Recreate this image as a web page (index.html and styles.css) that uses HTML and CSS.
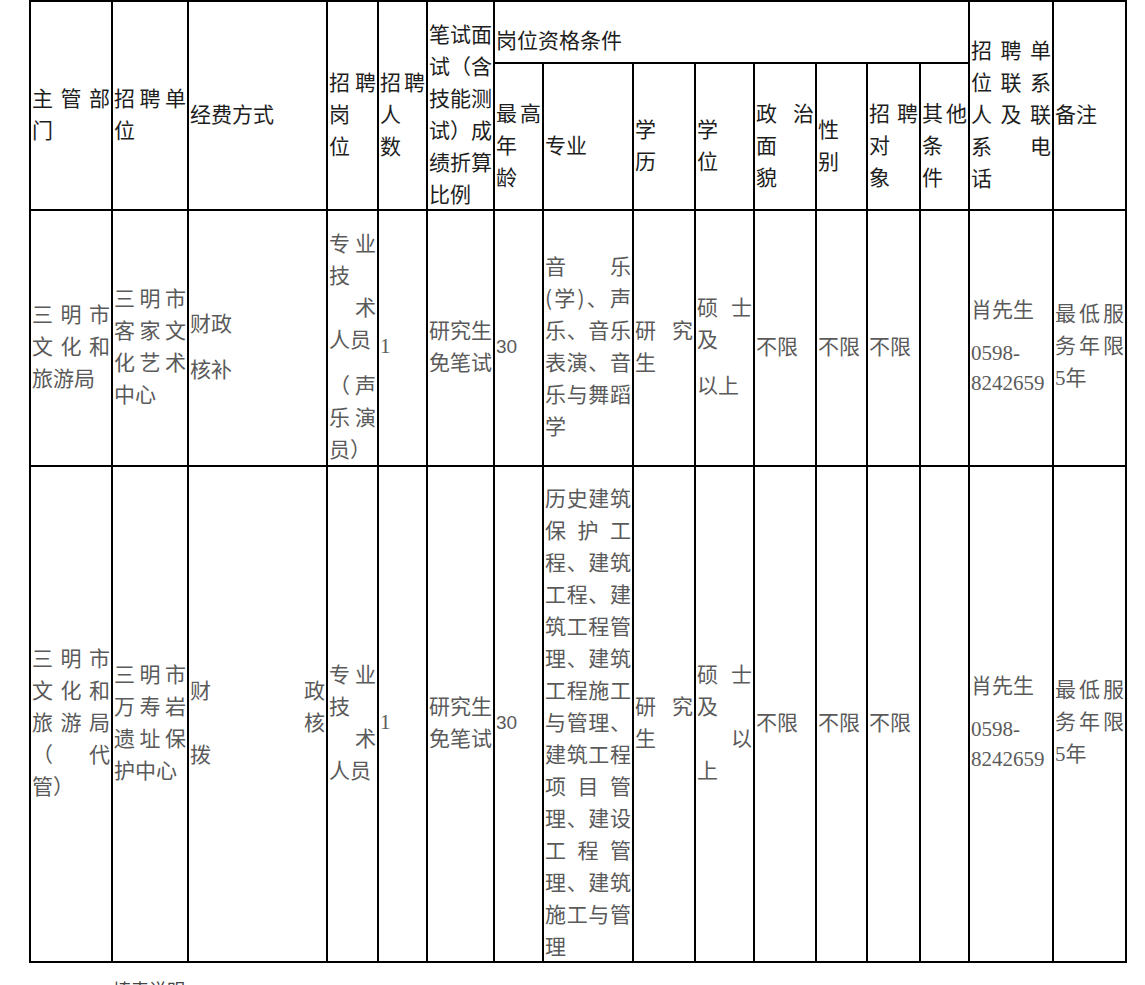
FILE: index.html
```html
<!DOCTYPE html>
<html lang="zh-CN">
<head>
<meta charset="utf-8">
<title>招聘岗位表</title>
<link rel="stylesheet" href="styles.css">
</head>
<body>
<table class="sheet">
  <colgroup>
    <col style="width:82px"><col style="width:76px"><col style="width:139px"><col style="width:51px">
    <col style="width:49px"><col style="width:67px"><col style="width:49px"><col style="width:90px">
    <col style="width:62px"><col style="width:59px"><col style="width:62px"><col style="width:51px">
    <col style="width:53px"><col style="width:49px"><col style="width:84px"><col style="width:73px">
  </colgroup>
  <thead>
    <tr class="h1">
      <th rowspan="2"><span class="ln j">主管部</span><span class="ln">门</span></th>
      <th rowspan="2"><span class="ln j">招聘单</span><span class="ln">位</span></th>
      <th rowspan="2">经费方式</th>
      <th rowspan="2"><span class="ln j">招聘</span><span class="ln">岗</span><span class="ln">位</span></th>
      <th rowspan="2"><span class="ln j">招聘</span><span class="ln">人</span><span class="ln">数</span></th>
      <th rowspan="2"><span class="ln j">笔试面</span><span class="ln j">试（含</span><span class="ln j">技能测</span><span class="ln j">试）成</span><span class="ln j">绩折算</span><span class="ln">比例</span></th>
      <th colspan="8">岗位资格条件</th>
      <th rowspan="2"><span class="ln j">招聘单</span><span class="ln j">位联系</span><span class="ln j">人及联</span><span class="ln j">系电</span><span class="ln">话</span></th>
      <th rowspan="2">备注</th>
    </tr>
    <tr class="h2">
      <th><span class="ln j">最高</span><span class="ln">年</span><span class="ln">龄</span></th>
      <th>专业</th>
      <th><span class="ln">学</span><span class="ln">历</span></th>
      <th><span class="ln">学</span><span class="ln">位</span></th>
      <th><span class="ln j">政治</span><span class="ln">面</span><span class="ln">貌</span></th>
      <th><span class="ln">性</span><span class="ln">别</span></th>
      <th><span class="ln j">招聘</span><span class="ln">对</span><span class="ln">象</span></th>
      <th><span class="ln j">其他</span><span class="ln">条</span><span class="ln">件</span></th>
    </tr>
  </thead>
  <tbody>
    <tr class="r1">
      <td><span class="ln j">三明市</span><span class="ln j">文化和</span><span class="ln">旅游局</span></td>
      <td><span class="ln j">三明市</span><span class="ln j">客家文</span><span class="ln j">化艺术</span><span class="ln">中心</span></td>
      <td><span class="ln">财政</span><span class="ln gap">核补</span></td>
      <td><span class="ln j">专业</span><span class="ln">技</span><span class="ln r">术</span><span class="ln">人员</span><span class="ln j gap">（声</span><span class="ln j">乐演</span><span class="ln">员）</span></td>
      <td><span class="num">1</span></td>
      <td><span class="ln">研究生</span><span class="ln">免笔试</span></td>
      <td><span class="sn">30</span></td>
      <td><span class="ln j">音乐</span><span class="ln j">(学)、声</span><span class="ln j">乐、音乐</span><span class="ln j">表演、音</span><span class="ln j">乐与舞蹈</span><span class="ln">学</span></td>
      <td><span class="ln j">研究</span><span class="ln">生</span></td>
      <td><span class="ln j">硕士</span><span class="ln">及</span><span class="ln gap">以上</span></td>
      <td>不限</td>
      <td>不限</td>
      <td>不限</td>
      <td></td>
      <td><span class="ln">肖先生</span><span class="ln gap num tel">0598-</span><span class="ln num tel">8242659</span></td>
      <td><span class="ln j">最低服</span><span class="ln j">务年限</span><span class="ln"><span class="num">5</span>年</span></td>
    </tr>
    <tr class="r2">
      <td><span class="ln j">三明市</span><span class="ln j">文化和</span><span class="ln j">旅游局</span><span class="ln j">（代</span><span class="ln">管）</span></td>
      <td><span class="ln j">三明市</span><span class="ln j">万寿岩</span><span class="ln j">遗址保</span><span class="ln">护中心</span></td>
      <td><span class="ln j">财政</span><span class="ln r">核</span><span class="ln">拨</span></td>
      <td><span class="ln j">专业</span><span class="ln">技</span><span class="ln r">术</span><span class="ln">人员</span></td>
      <td><span class="num">1</span></td>
      <td><span class="ln">研究生</span><span class="ln">免笔试</span></td>
      <td><span class="sn">30</span></td>
      <td><span class="ln j">历史建筑</span><span class="ln j">保护工</span><span class="ln j">程、建筑</span><span class="ln j">工程、建</span><span class="ln j">筑工程管</span><span class="ln j">理、建筑</span><span class="ln j">工程施工</span><span class="ln j">与管理、</span><span class="ln j">建筑工程</span><span class="ln j">项目管</span><span class="ln j">理、建设</span><span class="ln j">工程管</span><span class="ln j">理、建筑</span><span class="ln j">施工与管</span><span class="ln">理</span></td>
      <td><span class="ln j">研究</span><span class="ln">生</span></td>
      <td><span class="ln j">硕士</span><span class="ln">及</span><span class="ln r">以</span><span class="ln">上</span></td>
      <td>不限</td>
      <td>不限</td>
      <td>不限</td>
      <td></td>
      <td><span class="ln">肖先生</span><span class="ln gap num tel">0598-</span><span class="ln num tel">8242659</span></td>
      <td><span class="ln j">最低服</span><span class="ln j">务年限</span><span class="ln"><span class="num">5</span>年</span></td>
    </tr>
  </tbody>
</table>
<p class="note">填表说明</p>
</body>
</html>
```
FILE: styles.css
```css
* { box-sizing: border-box; }
html, body { margin: 0; background: #fff; }
body {
  font-family: "Noto Sans CJK SC", "Noto Sans", sans-serif;
  font-size: 21px;
  line-height: 32px;
  color: #5a5a5a;
}
.sheet {
  border-collapse: collapse;
  table-layout: fixed;
  width: 1098px;
  margin: 0 0 0 29px;
}
.sheet th, .sheet td {
  border: 2px solid #000;
  padding: 14px 1px 0;
  vertical-align: middle;
  text-align: left;
  font-weight: 400;
}
.sheet th { color: #1e1e1e; }
.h1 { height: 62px; }
.h2 { height: 147px; }
.r1 { height: 256px; }
.r2 { height: 496px; }
.ln { display: block; }
.j { text-align: justify; text-align-last: justify; }
.r { text-align: right; }
.gap { margin-top: 14px; }
.num { font-family: "Liberation Serif", serif; }
.tel { line-height: 30px; }
.sn { font-family: "Liberation Sans", sans-serif; font-size: 19px; }
.note {
  margin: 10px 0 0 113px;
  font-size: 18px;
  color: #444;
}
```
